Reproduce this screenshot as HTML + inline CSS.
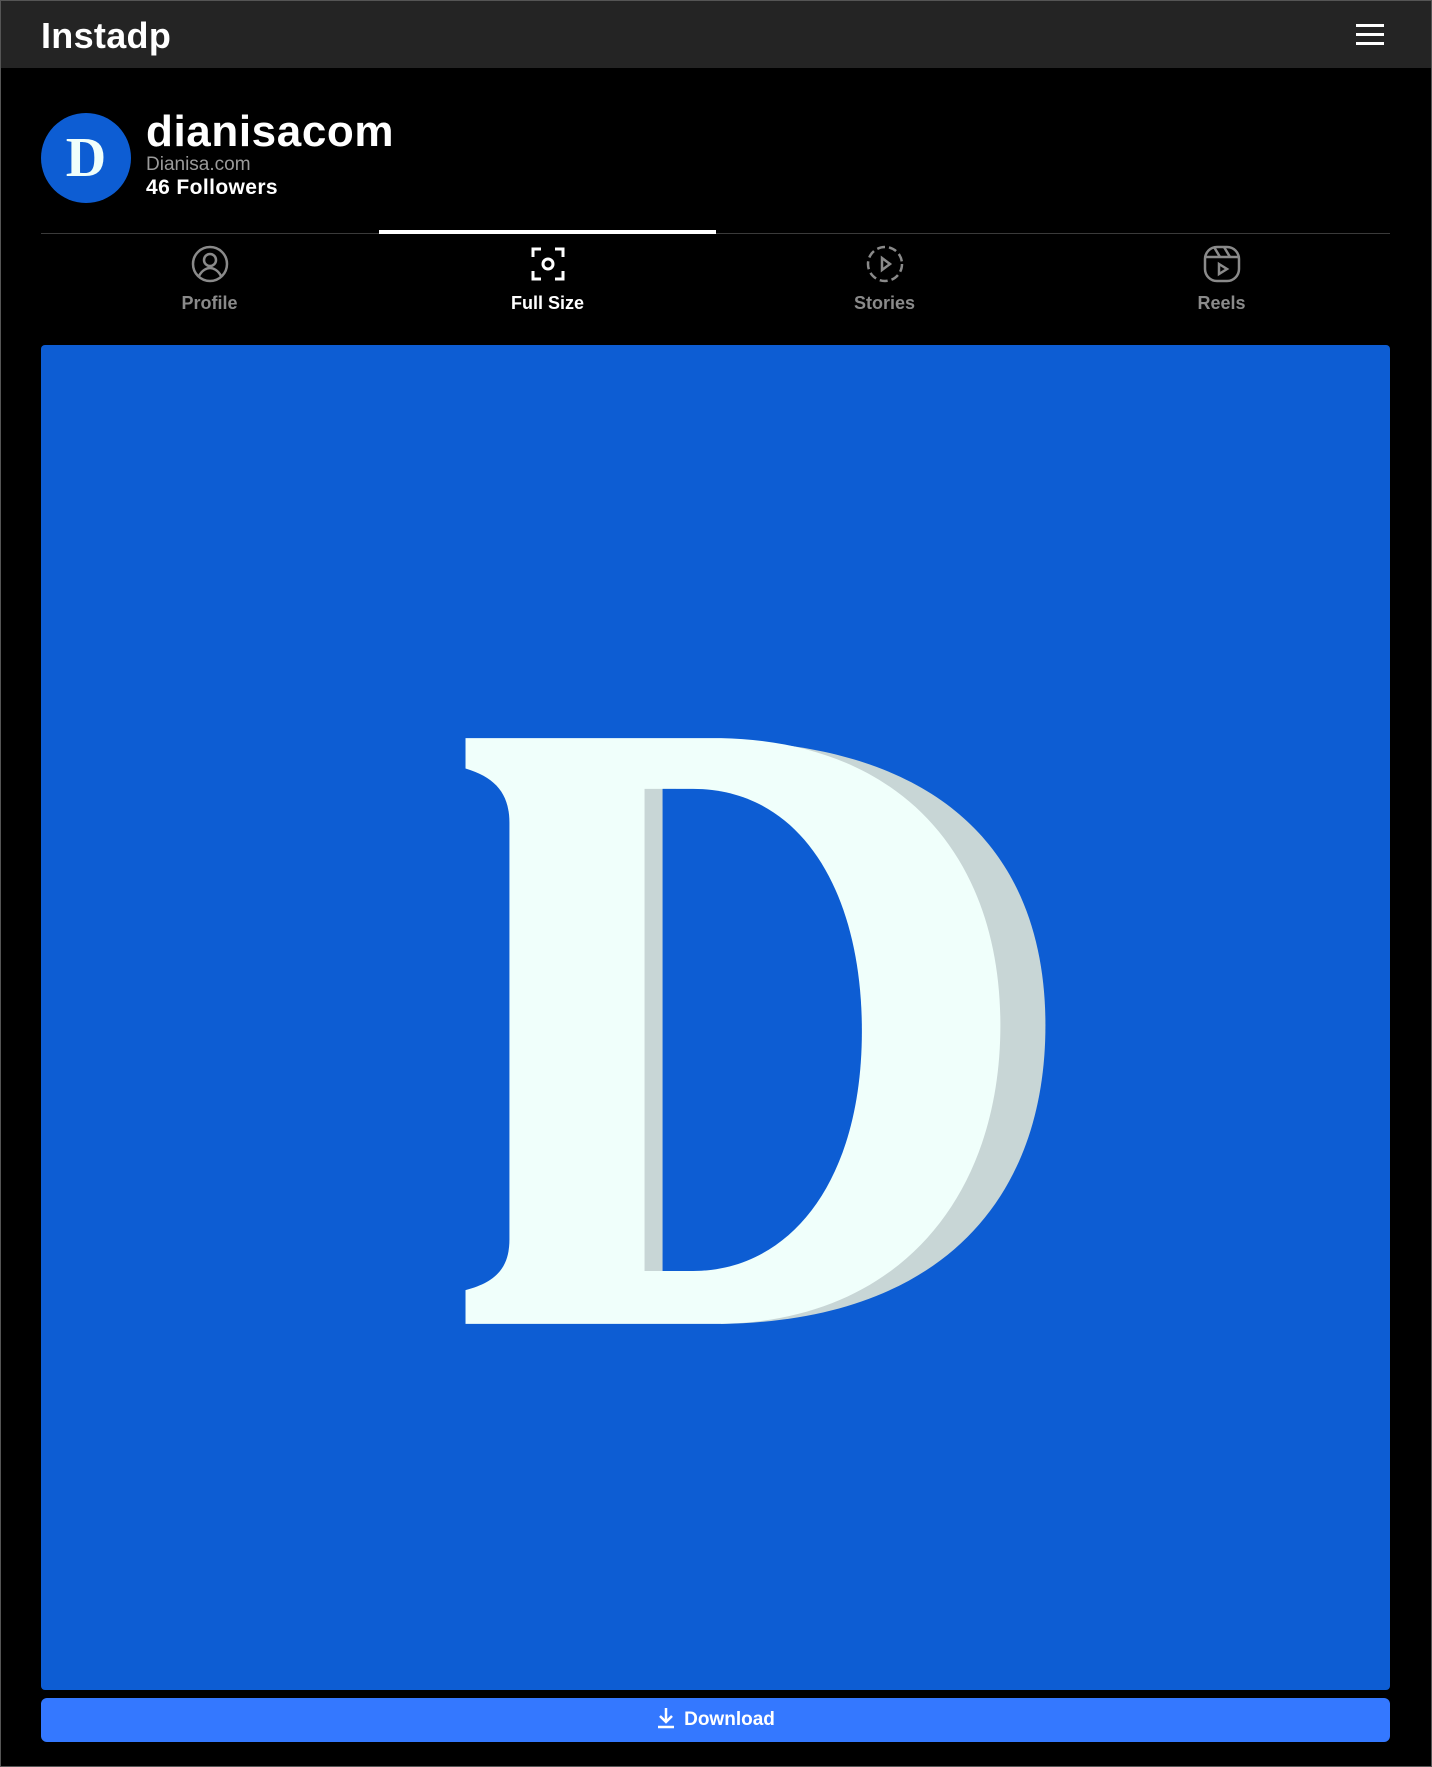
<!DOCTYPE html>
<html><head><meta charset="utf-8"><style>
*{margin:0;padding:0;box-sizing:border-box}
html,body{width:1432px;height:1767px;background:#000;overflow:hidden;font-family:"Liberation Sans",sans-serif}
.frame{position:absolute;left:0;top:0;width:1432px;height:1767px;border:1px solid #555}
.hdr{position:absolute;left:1px;top:1px;width:1430px;height:67px;background:#242424}
.logo{position:absolute;left:40px;top:14px;color:#fff;font-weight:bold;font-size:36px;letter-spacing:0.3px}
.ham{position:absolute;left:1355px;top:23px;width:28px}
.ham i{display:block;height:3px;background:#fff;margin-bottom:6px}
.av{position:absolute;left:41px;top:113px;width:90px;height:90px;border-radius:50%;background:#0d5dd3;color:#f0fffb;font-family:"Liberation Serif",serif;font-weight:bold;font-size:56px;text-align:center;line-height:90px}
.un{position:absolute;left:146px;top:107px;color:#fff;font-weight:bold;font-size:44px;letter-spacing:0.6px}
.dom{position:absolute;left:146px;top:154px;color:#9a9a9a;font-size:19px}
.fol{position:absolute;left:146px;top:176px;color:#fff;font-weight:bold;font-size:21px;letter-spacing:0.4px}
.line{position:absolute;left:41px;top:233px;width:1349px;height:1px;background:#3a3a3a}
.act{position:absolute;left:379px;top:230px;width:337px;height:4px;background:#fff}
.tab{position:absolute;top:245px;width:337px;text-align:center;color:#8a8a8a;font-weight:bold;font-size:18px}
.tab svg{display:block;margin:0 auto 10px}
.img{position:absolute;left:41px;top:345px;width:1349px;height:1345px;background:#0d5dd3;border-radius:4px;overflow:hidden}
.btn{position:absolute;left:41px;top:1698px;width:1349px;height:44px;background:#3478ff;border-radius:6px;color:#fff;font-weight:bold;font-size:19px;text-align:center;line-height:44px}
</style></head><body>
<div class="frame"></div>
<div class="hdr"><div class="logo">Instadp</div><div class="ham"><i></i><i></i><i></i></div></div>
<div class="av">D</div>
<div class="un">dianisacom</div>
<div class="dom">Dianisa.com</div>
<div class="fol">46 Followers</div>
<div class="line"></div><div class="act"></div>
<div class="tab" style="left:41px"><svg width="38" height="38" viewBox="0 0 38 38" fill="none" stroke="#8a8a8a" stroke-width="2.5"><circle cx="19" cy="19" r="17"/><circle cx="19" cy="15" r="6"/><path d="M8 31c3-6 8-8 11-8s8 2 11 8"/></svg>Profile</div>
<div class="tab" style="left:379px;color:#fff"><svg width="38" height="38" viewBox="0 0 38 38" fill="none" stroke="#fff" stroke-width="3"><path d="M4 12V4h8M26 4h8v8M34 26v8h-8M12 34H4v-8"/><circle cx="19" cy="19" r="5"/></svg>Full Size</div>
<div class="tab" style="left:716px"><svg width="38" height="38" viewBox="0 0 38 38" fill="none" stroke="#8a8a8a" stroke-width="2.5"><circle cx="19" cy="19" r="17" stroke-dasharray="8 4"/><path d="M16 13l8 6-8 6z"/></svg>Stories</div>
<div class="tab" style="left:1053px"><svg width="38" height="38" viewBox="0 0 38 38" fill="none" stroke="#8a8a8a" stroke-width="2.5"><rect x="2" y="2" width="34" height="34" rx="12"/><path d="M2 12h34M11 2l6 10M21 2l6 10"/><path d="M16 19l8 5-8 5z"/></svg>Reels</div>
<div class="img"><svg width="1349" height="1345" viewBox="36 306 1198 1194" preserveAspectRatio="none">
<path fill="#c8d6d6" d="M640 657C850 662 928 770 928 910C928 1060 840 1172 640 1175Z"/>
<path fill="#f0fffb" d="M413 655L640 655C800 658 888 760 888 910C888 1060 800 1172 640 1175L413 1175L413 1145C440 1138 452 1125 452 1100L452 730C452 705 440 690 413 682Z"/>
<path fill="#c8d6d6" d="M572 700H600V1128H572Z"/>
<path fill="#0d5dd3" d="M588 700L615 700C710 700 765 790 765 915C765 1050 700 1128 615 1128L588 1128Z"/>
</svg></div>
<div class="btn"><svg width="20" height="22" viewBox="0 0 20 22" style="vertical-align:-4px;margin-right:8px" fill="none" stroke="#fff" stroke-width="2.5"><path d="M10 1v14M4 9l6 6 6-6M2 20h16"/></svg>Download</div>
</body></html>
